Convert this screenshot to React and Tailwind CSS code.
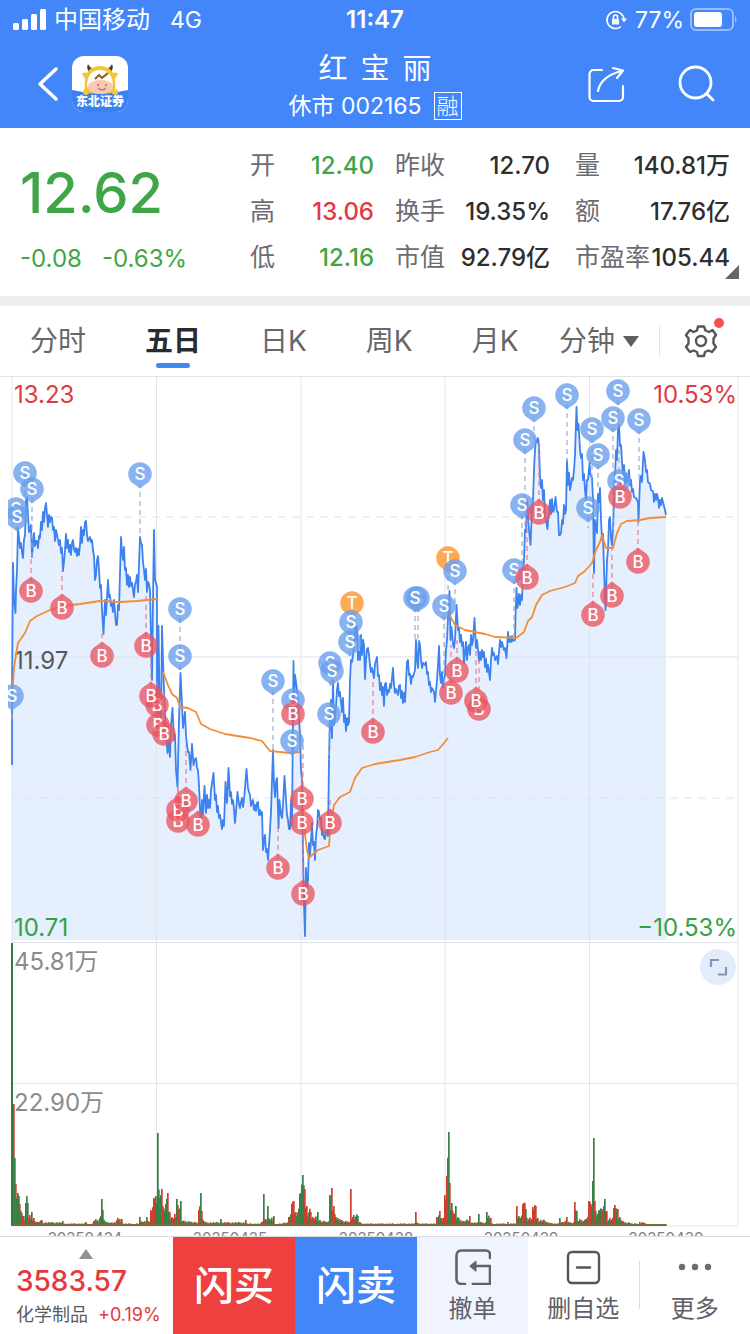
const CJK = "font-['Inter','Noto_Sans_CJK_SC',sans-serif]";

const QUOTES = [
  [
    ["开", "12.40", "text-[#3fa648]"],
    ["高", "13.06", "text-[#e5383f]"],
    ["低", "12.16", "text-[#3fa648]"],
  ],
  [
    ["昨收", "12.70", "text-[#2e2e30]"],
    ["换手", "19.35%", "text-[#2e2e30]"],
    ["市值", "92.79亿", "text-[#2e2e30]"],
  ],
  [
    ["量", "140.81万", "text-[#2e2e30]"],
    ["额", "17.76亿", "text-[#2e2e30]"],
    ["市盈率", "105.44", "text-[#2e2e30]"],
  ],
];

const PRICE =
  "12,765 12,695 13,563 14,600 15.5,613 16,590 17,570 18,528 20,548 21,543 22,552 23,558 24,540 25,535 26,500 27,497 28,515 29,532 30,530 31,525 32,557 33,545 34,533 35,546 36,541 37,541 38,548 39,536 40,538 41,522 42,530 43,512 44,522 45,508 46,503 47,515 48,527 49,515 50,522 51,517 52,518 53,530 54,527 55,541 56,530 57,535 59,545 60,540 61,553 62,548 63,571 64,562 65,550 66,534 67,548 68,540 69,552 70,545 71,555 72,543 73,540 74,549 75,552 76,548 77,556 78,549 79,555 80,545 81,527 82,543 83,530 84,535 85,522 86,521 87,535 88,541 90,537 91,542 92,540 93,550 94,556 95,580 96,575 97,560 98,556 99,570 100,588 101,585 102,610 103.5,634 105,600 106,615 108,580 109,597 110,595 111,606 112,603 113,612 114,600 115,612 116,625 117,625 118,605 119,610 121,537 122,552 123,560 124,547 125,570 126,568 127,585 128,575 129,587 130,577 131,586 132,583 134,597 135,584 136,582 137,575 138,592 140,537 141,543 142,545 143,562 144,570 145,580 146,569 147,592 148,582 149,584 150,590 151,638 152,680 153,600 154,530 155,580 156,583 157,587 157,720 158.5,626 159.5,700 161,720 162,626 163,660 164,690 165,715 166,735 167.5,753 168.5,740 170,757 171,725 172.5,708 174,740 175,735 176,770 177.5,787 179,720 180.5,673 182,705 183,728 184,720 185,712 186,735 187,745 188,752 189,752 190.5,770 192,744 193.5,765 194.5,760 196,758 197,768 198,770 199,785 200,810 201,825 202,800 203,815 204.5,786 206,813 207,795 208,808 209,800 210,808 211,790 213.5,773 215,800 216,795 217,812 218,806 219,818 220,815 222,829 223,820 224,826 225.5,782 226,792 227,803 228.5,768 230,796 231,792 232,804 233,800 234,809 235,823 236,812 237.5,792 239,804 240,808 241,802 242,798 243,807 244,800 246.5,769 248,788 249,792 250,795 251,806 252,802 253,800 254,810 255,805 256,811 257,803 258,802 259,815 260,810 261,815 262,812 263,850 264,840 265,835 266,852 267,849 268,860 270,830 271,812 273,750 274,785 275,797 276,782 277,778 278.5,828 279.5,800 281,815 282,818 283,805 284.5,776 286,800 287,815 288,820 289,829 290,829 291,800 292,825 293.5,661 294,700 295,675 296,682 297,690 298,700 299,720 300,735 301,770 302,780 303,850 304,905 305,936 306,868 307,890 308,880 309,843 310,855 311,840 312,823 313,845 314,842 315,860 316,835 317,828 318,810 319,812 320,820 321,818 322,835 323,830 324,838 325,839 326,832 327,830 328,836 329,760 330,720 331,700 332,738 333,680 334,725 335,718 336,706 337,690 338,683 339,696 340,692 341,702 342,712 343,698 344,722 345,715 346,731 347,718 348,725 349,722 350,680 351,660 352,662 353,655 354,645 355,622 356,640 357,626 358,660 359,652 360,660 361,635 362,655 363,640 364,645 365,679 366,660 367,649 368,648 369,655 370,665 371,672 372,668 374,678 375,664 377,657 378,676 379,675 380,690 381,683 382,695 383,687 384,706 385,684 386,683 387,695 388,690 389,692 390,684 391,688 393,668 394,685 395,693 396,689 398,695 399,686 400,685 401,698 402,691 403,703 404,693 405,702 407,662 408,660 409,675 410,674 411,684 412,676 413,677 415,670 416,640 417,660 418,668 419,641 420,645 421,660 422,668 423,663 425,665 426,662 427,674 428,672 429,685 430,682 431,692 432,688 434,692 435,702 437,680 438,665 439,646 440,675 441,683 442,672 443,688 444,680 445,675 446,650 447,640 448,618 449.5,591 450.5,640 451.5,627 453,644 454,648 455,640 456.5,605 458,630 459,628 460,642 461,635 462,646 463,642 464,663 466,642 467,660 468,648 469,645 470,655 471,635 472,645 473,640 474.5,618 476,648 477,640 478,650 479,661 480,652 481,660 482,650 483,657 484,652 485,667 486,659 487,672 488,665 490,680 491,660 492,648 493,655 494,653 495,660 497,656 498,664 500,640 501,647 502,642 504,650 505,648 506.5,658 508,632 509,642 510,637 511,642 512,636 513,641 515,640 515.5,616 516.5,588 517.5,608 519,594 520,605 521,595 522,600 523,575 524,560 525,530 526,532 527,500 528,518 529,530 530.5,545 532,510 533,500 534,470 535,450 536,440 537,442 538,438 539,446 540,478 541,488 542,480 543,500 544,490 545,518 546,520 547.5,529 548.5,515 550,500 551,514 552,499 553,512 554,510 555.5,497 557,512 558,512 559,535 560,535 561,533 562,520 563,524 564,505 565,514 566,510 567,460 568,485 569,473 570,490 571,485 572,478 573,480 574,470 575,455 576.5,407 577.5,430 578.5,424 580,450 581,458 582,454 583,480 584,474 585,490 586,500 587,480 588,480 589.5,463 590.5,475 592,478 593,500 594,573 595,520 597,533 598,494 599,502 600,488 601,520 602,540 603,534 604,570 605.5,610 607,560 608,550 609,520 610,517 611,538 612,545 613,530 614,500 615,480 616,450 617,460 618,430 619,425 620,446 621,445 622,462 623,475 624,465 625,484 626,474 627,482 628,478 629,470 630,485 631,480 632,492 633,489 634,497 636,498 638,502 638.5,522 640,480 641,476 642,482 643.5,452 645,460 646,472 647,470 648,482 650,484 651,490 653,491 654,502 655,494 656,500 657,494 658,498 659,508 660,500 661,505 662,498 664,506 665,510 666,515";

const AVERAGES = [
  "12,700 14,668 16,655 18,643 25,633 30,621 37,616 50,610 62,606 80,604 100,601 120,602 137,601 157,599",
  "163,672 168,685 172,694 177,698 180,707 188,708 196,712 201,724 210,729 225,734 250,738 262,741 270,751 290,753 300,752",
  "303,810 305,835 307,850 309,858 312,855 318,850 329,846 331,820 334,805 340,797 350,792 355,778 362,768 375,764 400,760 415,757 430,752 438,750 444,743 448,738",
  "449,614 455,625 465,630 485,634 495,637 516,638 524,632 528,621 532,617 536,605 542,595 550,591 565,587 575,583 578,576 585,571 592,563 596,550 600,542 602,535 606,548 613,548 617,533 621,524 627,521 640,520 650,518 666,517",
];

// kind, x, y, far end of the dashed lead
const MARKS = [
  ["S", 25, 473, 497], ["S", 32, 489, 556], ["S", 16, 509, 530], ["S", 17, 517, 530],
  ["S", 140, 474, 537], ["S", 12, 696, 720], ["S", 180, 609, 656], ["S", 180, 656, 673],
  ["S", 273, 681, 750], ["S", 293, 700, 720], ["S", 292, 741, 760],
  ["T", 352, 603, 625], ["S", 351, 622, 640], ["S", 350, 642, 660],
  ["S", 330, 663, 690], ["S", 332, 671, 690], ["S", 329, 714, 760],
  ["S", 418, 598, 645], ["S", 415, 598, 642], ["S", 444, 606, 684],
  ["T", 448, 558, 600], ["S", 455, 571, 605], ["S", 514, 570, 636],
  ["S", 522, 505, 595], ["S", 525, 440, 530], ["S", 534, 408, 440],
  ["S", 567, 395, 462], ["S", 592, 429, 478], ["S", 598, 455, 490],
  ["S", 588, 508, 528], ["S", 613, 418, 530], ["S", 618, 391, 425],
  ["S", 619, 481, 450], ["S", 639, 420, 480],
  ["B", 31, 591, 556], ["B", 62, 608, 570], ["B", 102, 656, 634], ["B", 146, 646, 592],
  ["B", 157, 705, 680], ["B", 151, 696, 638], ["B", 158, 725, 700], ["B", 164, 734, 690],
  ["B", 178, 821, 787], ["B", 178, 810, 787], ["B", 186, 801, 745], ["B", 198, 825, 810],
  ["B", 278, 868, 828], ["B", 293, 714, 700], ["B", 302, 799, 770], ["B", 302, 823, 800],
  ["B", 303, 894, 740], ["B", 330, 823, 800], ["B", 373, 732, 678], ["B", 457, 671, 640],
  ["B", 451, 693, 645], ["B", 479, 709, 660], ["B", 476, 701, 650], ["B", 539, 513, 440],
  ["B", 527, 578, 510], ["B", 593, 615, 570], ["B", 612, 596, 545], ["B", 620, 497, 470],
  ["B", 638, 562, 520],
];

const MARK_FILL = { S: "#669eec", B: "#ea5560", T: "#fb9226" };

// x, height, and an optional colour for a bar that stands out
const VOLUME = [
  [14, 122, "r"], [15, 68, "g"], [16, 42], [18, 33], [20, 22], [22, 13], [24, 10], [25, 6],
  [26, 23, "g"], [28, 23, "g"], [29, 8], [32, 14, "g"], [34, 8], [38, 4], [42, 6, "r"], [50, 3],
  [63, 5], [70, 2], [80, 2], [86, 4], [90, 2], [94, 5], [100, 8], [102, 27, "g"], [103, 16, "g"],
  [105, 5], [110, 3], [117, 6, "r"], [122, 7], [128, 2], [134, 2], [140, 9, "g"], [143, 4],
  [147, 9], [149, 4], [151, 16, "r"], [154, 28], [156, 30], [158, 93, "g"], [160, 28],
  [162, 37, "r"], [163, 20], [165, 15], [166, 22, "g"], [168, 33, "r"], [170, 14], [173, 8],
  [175, 12], [177, 27, "g"], [179, 17, "r"], [181, 25, "g"], [183, 5], [192, 4], [196, 3],
  [199, 16], [201, 33, "g"], [202, 15], [204, 5], [210, 3], [221, 7, "g"], [224, 3], [235, 3],
  [246, 6, "r"], [249, 2], [262, 4], [264, 32, "g"], [266, 7], [268, 20, "g"], [270, 6],
  [274, 10, "g"], [277, 2], [284, 3], [289, 9], [292, 22, "r"], [294, 25, "r"], [296, 14],
  [300, 32], [303, 51, "g"], [305, 37, "r"], [307, 20], [311, 14, "r"], [314, 7], [318, 14],
  [320, 6], [327, 4], [330, 31, "r"], [332, 38, "r"], [334, 20], [336, 9], [342, 6], [349, 4],
  [351, 37, "r"], [353, 9], [358, 10, "g"], [361, 3], [370, 2], [395, 2], [408, 2],
  [416, 14, "r"], [418, 3], [430, 2], [437, 9], [440, 15, "r"], [442, 8], [445, 31, "r"],
  [447, 50, "r"], [449, 94, "g"], [450, 43, "r"], [452, 23, "g"], [454, 12], [456, 20],
  [459, 8], [464, 5], [470, 10, "r"], [473, 3], [479, 12, "g"], [482, 3], [487, 14, "g"],
  [491, 8], [494, 2], [508, 4], [512, 2], [517, 20, "r"], [520, 8], [523, 22, "r"],
  [524, 23, "r"], [526, 17, "g"], [529, 7], [533, 19, "r"], [536, 20, "r"], [538, 8],
  [545, 5], [552, 3], [556, 2], [560, 8, "g"], [563, 4], [567, 9, "r"], [570, 3],
  [575, 24, "r"], [577, 15, "g"], [579, 5], [586, 7], [589, 25, "r"], [591, 22, "r"],
  [593, 45, "g"], [594, 88, "g"], [595, 25, "r"], [598, 12], [600, 16], [602, 17],
  [605, 27, "g"], [607, 15], [609, 6], [614, 18, "r"], [616, 18, "r"], [618, 17, "r"],
  [620, 9], [623, 5], [630, 3], [634, 2], [640, 4], [645, 3], [650, 1], [666, 2],
];

function volumeBars() {
  const bars = [];
  for (let i = 0; i < VOLUME.length; i += 1) {
    const [x, h, tone] = VOLUME[i];
    const next = VOLUME[i + 1];
    bars.push({ x, h, tone: tone || (x % 3 ? "r" : "g") });
    if (!next) break;
    for (let step = x + 1; step < next[0]; step += 1) {
      const low = Math.min(h, next[1]);
      const swing = 0.7 + ((step * 37) % 11) / 15;
      bars.push({ x: step, h: Math.max(1, low * swing), tone: (step * 7) % 5 < 2 ? "r" : "g" });
    }
  }
  return bars;
}

const DAYS = [["20250424", 85], ["20250425", 230], ["20250428", 376], ["20250429", 521], ["20250430", 666]];

function Mark({ kind, x, y }) {
  const tip = kind === "B" ? -1 : 1;
  return (
    <g>
      <path
        d={`M${x - 5} ${y + tip * 10.7} L${x} ${y + tip * 14.5} L${x + 5} ${y + tip * 10.7} A11.8 11.8 0 1 ${tip > 0 ? 0 : 1} ${x - 5} ${y + tip * 10.7} Z`}
        fill={MARK_FILL[kind]}
        opacity="0.78"
      />
      <text x={x} y={y + 6} textAnchor="middle" fill="#fff" className="text-[17px] font-medium">
        {kind}
      </text>
    </g>
  );
}

function Chart() {
  return (
    <svg
      viewBox="0 376 750 860"
      className="block w-full font-['Inter','Noto_Sans_CJK_SC',sans-serif]"
      role="img"
      aria-label="五日走势图"
    >
      <polygon points={`12,940 ${PRICE} 666,940`} fill="#e5effd" />
      <g stroke="#e0e3e8" strokeWidth="1">
        <path d="M0 376.500H750M12 657H738M12 942.500H738M12 1083.500H738M12 1226H738" fill="none" />
        <path d="M12 377V1226M156.500 377V1226M301 377V1226M445 377V1226M589.500 377V1226M738 377V1226" fill="none" />
        <path d="M12 517H738M12 798H738" fill="none" strokeDasharray="8 6" />
      </g>
      <g className="text-[24px]">
        <text x="14" y="403" fill="#e0393f">13.23</text>
        <text x="737" y="403" textAnchor="end" fill="#e0393f">10.53%</text>
        <text x="14" y="669" fill="#55585e">11.97</text>
        <text x="14" y="936" fill="#35a23f">10.71</text>
        <text x="737" y="936" textAnchor="end" fill="#35a23f">−10.53%</text>
        <text x="14" y="970" fill="#8b8b8e">45.81万</text>
        <text x="14" y="1111" fill="#8b8b8e">22.90万</text>
      </g>
      <g fill="none" strokeLinejoin="round">
        <polyline points={PRICE} stroke="#3d82ee" strokeWidth="1.800" />
        {AVERAGES.map((points) => (
          <polyline key={points} points={points} stroke="#f28d35" strokeWidth="1.800" />
        ))}
      </g>
      {MARKS.map(([kind, x, y, end]) => (
        <line
          key={`${kind}${x}-${y}`}
          x1={x}
          x2={x}
          y1={y}
          y2={end}
          stroke={kind === "B" ? "#e87c8c" : "#9fa9cc"}
          strokeWidth="1.200"
          strokeDasharray="5 4"
        />
      ))}
      <clipPath id="plot">
        <rect x="8" y="376" width="742" height="580" />
      </clipPath>
      <g clipPath="url(#plot)">
        {MARKS.map(([kind, x, y]) => (
          <Mark key={`${kind}${x}-${y}`} kind={kind} x={x} y={y} />
        ))}
      </g>
      {volumeBars().map(({ x, h, tone }) => (
        <rect
          key={x}
          x={x - 1}
          y={1226 - h}
          width="1.700"
          height={h}
          fill={tone === "r" ? "#cf3f30" : "#3c7f46"}
        />
      ))}
      <rect x="11" y="943" width="2" height="283" fill="#2f7d43" />
      <rect x="12" y="1224" width="654" height="2" fill="#7c6a3c" />
      <g className="text-[15px]" fill="#808084">
        {DAYS.map(([day, x]) => (
          <text key={day} x={x} y="1243" textAnchor="middle">{day}</text>
        ))}
      </g>
      <circle cx="718" cy="967" r="18" fill="#e3ecfa" />
      <path d="M711 967V960H719M726 967V974.500H718" fill="none" stroke="#8296bd" strokeWidth="2.200" />
    </svg>
  );
}

function Logo() {
  return (
    <svg viewBox="0 0 56 56" className="size-14 rounded-xl" role="img" aria-label="东北证券">
      <rect width="56" height="56" fill="#fff" />
      <path d="M0 34Q28 41 56 34V56H0Z" fill="#3a82f2" />
      <path d="M17 16Q14 12 16 8Q18 12 22 13ZM39 16Q42 12 40 8Q38 12 34 13Z" fill="#5c3a2c" />
      <path d="M10 17Q15 15 18 20L16 25Q11 22 10 17ZM46 17Q41 15 38 20L40 25Q45 22 46 17Z" fill="#f5c542" />
      <path d="M13 37Q10 10 28 10Q46 10 43 37Z" fill="#f3c638" />
      <path d="M15 31Q15 14 28 14Q41 14 41 31Z" fill="#fffaf2" />
      <ellipse cx="28.500" cy="31" rx="12.500" ry="7" fill="#fac9b5" />
      <path d="M23 23L27 19L30 22L36 17" stroke="#8c5228" strokeWidth="1.800" fill="none" />
      <path d="M26 32Q30 36 34 32" stroke="#d0785f" strokeWidth="1.400" fill="none" />
      <circle cx="26" cy="29" r="1" fill="#c06a50" />
      <circle cx="34" cy="29" r="1" fill="#c06a50" />
      <circle cx="14" cy="36" r="3" fill="#f3c638" />
      <circle cx="43" cy="36" r="3" fill="#f3c638" />
      <text x="28" y="50" textAnchor="middle" fill="#fff" className="font-['Noto_Sans_CJK_SC',sans-serif] text-[12px] font-black">
        东北证券
      </text>
    </svg>
  );
}

function StatusBar() {
  return (
    <div className="grid h-10 grid-cols-3 items-center pr-3 pl-3 text-[23px] leading-7">
      <div className="flex items-center">
        <svg viewBox="0 0 34 24" className="h-6 w-[34px]" fill="#fff" aria-hidden="true">
          <rect x="1" y="15" width="6" height="7" rx="1.500" />
          <rect x="10" y="11" width="6" height="11" rx="1.500" />
          <rect x="19" y="6" width="6" height="16" rx="1.500" />
          <rect x="28" y="1" width="6" height="21" rx="1.500" />
        </svg>
        <span className="ml-2 text-[24px]">中国移动</span>
        <span className="ml-5">4G</span>
      </div>
      <div className="text-center text-[24px] font-semibold">11:47</div>
      <div className="flex items-center justify-end">
        <svg viewBox="0 0 22 22" className="size-[22px]" fill="none" stroke="#fff" strokeWidth="1.600" aria-hidden="true">
          <path d="M19 11A8.500 8.500 0 1 0 16 17.500" />
          <path d="M16 9.500H22L19 13.500Z" fill="#fff" stroke="none" />
          <rect x="7" y="10" width="7" height="5.500" fill="#fff" stroke="none" />
          <path d="M8.500 10V8A2 2 0 0 1 12.500 8V10" />
        </svg>
        <span className="ml-2">77%</span>
        <svg viewBox="0 0 50 24" className="ml-1 h-6 w-[50px]" aria-hidden="true">
          <rect x="3" y="1" width="42" height="21" rx="5" fill="none" stroke="#fff" strokeOpacity="0.450" strokeWidth="2" />
          <rect x="6" y="4" width="28" height="15" rx="3" fill="#fff" />
          <path d="M47 8Q50 11.500 47 15Z" fill="#fff" fillOpacity="0.500" />
        </svg>
      </div>
    </div>
  );
}

function Header() {
  return (
    <header className="bg-[#4286fa] text-white">
      <StatusBar />
      <div className="grid h-[88px] grid-cols-[1fr_auto_1fr] items-center pr-8 pl-8">
        <div className="flex items-center">
          <button type="button" aria-label="返回" className="h-10 w-8">
            <svg viewBox="0 0 32 40" className="h-10 w-8" fill="none" stroke="#fff" strokeWidth="3.500" strokeLinecap="round" strokeLinejoin="round">
              <path d="M24 5L8 20L24 35" />
            </svg>
          </button>
          <div className="ml-2">
            <Logo />
          </div>
        </div>
        <div className="text-center">
          <h1 className="font-['Noto_Sans_CJK_SC',sans-serif] text-[29px] leading-10 font-normal whitespace-pre">红  宝  丽</h1>
          <div className="mt-1 flex h-8 items-center justify-center gap-3 text-[23px]">
            <span>休市 002165</span>
            <span className="flex size-7 items-center justify-center border border-white text-[22px] font-light">融</span>
          </div>
        </div>
        <div className="flex items-center justify-end gap-[52px]">
          <button type="button" aria-label="分享">
            <svg viewBox="0 0 40 40" className="size-10" fill="none" stroke="#fff" strokeWidth="2.200" strokeLinecap="round" strokeLinejoin="round">
              <path d="M16 6H7.500A4 4 0 0 0 3.500 10V33A4 4 0 0 0 7.500 37H33A4 4 0 0 0 37 33V22" />
              <path d="M12 27Q15 12 36 7M27 4L37 6.500L31 14" />
            </svg>
          </button>
          <button type="button" aria-label="搜索">
            <svg viewBox="0 0 40 40" className="size-10" fill="none" stroke="#fff" strokeWidth="2.800" strokeLinecap="round">
              <circle cx="17.500" cy="18.500" r="15.500" />
              <path d="M29 30L35 36" />
            </svg>
          </button>
        </div>
      </div>
    </header>
  );
}

function Summary() {
  return (
    <section className="relative flex h-[168px] pt-[15px] pr-5 pl-5">
      <div className="w-[230px] text-[#3fa648]">
        <div className="pt-4 text-[56px] leading-[68px] font-medium">12.62</div>
        <div className="mt-4 flex gap-5 text-[24px] leading-8">
          <span>-0.08</span>
          <span>-0.63%</span>
        </div>
      </div>
      <dl className="grid flex-1 grid-cols-[124px_155px_1fr] gap-x-[21px]">
        {QUOTES.map((column, i) => (
          <div key={column[0][0]} className={i === 2 ? "flex flex-col pl-1" : "flex flex-col"}>
            {column.map(([label, value, tone]) => (
              <div key={label} className="flex h-[46px] items-center justify-between whitespace-nowrap">
                <dt className="text-[25px] text-[#6b6b72]">{label}</dt>
                <dd className={`text-[24px] font-medium ${tone}`}>{value}</dd>
              </div>
            ))}
          </div>
        ))}
      </dl>
      <svg viewBox="0 0 14 14" className="absolute right-[11px] bottom-[17px] size-3.5" aria-hidden="true">
        <path d="M14 0V14H0Z" fill="#65656a" />
      </svg>
    </section>
  );
}

function Tabs() {
  const tab = "flex h-full items-center text-[28px] text-[#66666b]";
  return (
    <nav className="flex h-[70px] items-center justify-between pr-8 pl-[30px]">
      <div className="flex h-full items-center gap-[59px]">
        <button type="button" className={tab}>分时</button>
        <button type="button" className="relative flex h-full items-center text-[28px] font-bold text-[#2b2b2e]">
          五日
          <span className="absolute bottom-2 left-1/2 h-[5px] w-[34px] -translate-x-1/2 rounded-full bg-[#4286f0]" />
        </button>
        <button type="button" className={tab}>日K</button>
        <button type="button" className={tab}>周K</button>
        <button type="button" className={tab}>月K</button>
      </div>
      <div className="flex items-center">
        <button type="button" className={tab}>
          分钟
          <svg viewBox="0 0 16 11" className="ml-2 h-[11px] w-4" aria-hidden="true">
            <path d="M0 0H16L8 11Z" fill="#5d5d62" />
          </svg>
        </button>
        <span className="ml-5 h-8 w-px bg-[#e6e6e8]" />
        <button type="button" aria-label="设置" className="relative ml-6">
          <svg viewBox="0 0 34 34" className="size-[34px]" fill="none" stroke="#55555a" strokeWidth="2.400" strokeLinejoin="round">
            <path d="M14 2.500H20L21.500 6.500L25 8L28.500 6L32 11L29.500 14.500V19.500L32 23L28 28L24.500 26.500L21 28L20 32H14L13 28L9.500 26.500L6 28L2 23L4.500 19.500V14.500L2 11L6 6L9.500 8L13 6.500Z" />
            <circle cx="17" cy="17" r="5" />
          </svg>
          <span className="absolute -top-1.5 -right-1.5 size-2.5 rounded-full bg-[#f4504f]" />
        </button>
      </div>
    </nav>
  );
}

function BottomBar() {
  const label = "mt-1.5 text-[24px] leading-9 text-[#606067]";
  return (
    <footer className="flex h-[98px] border-t border-[#dcdce0] bg-white">
      <button type="button" className="w-[173px] pt-[9px] pl-4 text-left">
        <svg viewBox="0 0 14 10" className="ml-[63px] h-2.5 w-3.5" aria-hidden="true">
          <path d="M7 0L14 10H0Z" fill="#909094" />
        </svg>
        <div className="mt-1 text-[28px] leading-9 font-medium text-[#e5383f]">3583.57</div>
        <div className="flex items-center gap-2.5 text-[18px] leading-8 whitespace-nowrap">
          <span className="text-[#5a5a5e]">化学制品</span>
          <span className="text-[#e5383f]">+0.19%</span>
        </div>
      </button>
      <button type="button" className="w-[122px] bg-[#ee413f] text-[40px] font-medium text-white">闪买</button>
      <button type="button" className="w-[122px] bg-[#4286fa] text-[40px] font-medium text-white">闪卖</button>
      <button type="button" className="flex w-[111px] flex-col items-center bg-[#f0f4fe] pt-3">
        <svg viewBox="0 0 36 36" className="size-9" fill="none" stroke="#62626c" strokeWidth="2.600" strokeLinecap="round">
          <path d="M10 35H6A5 5 0 0 1 1.500 30.500V6A5 5 0 0 1 6 1.500H31A4 4 0 0 1 35 5.500V9" />
          <path d="M18 35H35V17H18" strokeLinecap="square" />
          <path d="M15 17L21 12V22Z" fill="#62626c" strokeWidth="1" />
        </svg>
        <span className={label}>撤单</span>
      </button>
      <button type="button" className="flex flex-1 flex-col items-center pt-3">
        <svg viewBox="0 0 36 36" className="size-9" fill="none" stroke="#55555c" strokeWidth="2.400" strokeLinecap="round">
          <rect x="3" y="3" width="31" height="31" rx="4" />
          <path d="M12 18.500H25" />
        </svg>
        <span className={label}>删自选</span>
      </button>
      <span className="mt-6 h-12 w-px bg-[#dcdce0]" />
      <button type="button" className="flex flex-1 flex-col items-center pt-3">
        <svg viewBox="0 0 36 36" className="size-9" fill="#6c6c72" aria-hidden="true">
          <circle cx="5" cy="18" r="3.200" />
          <circle cx="18" cy="18" r="3.200" />
          <circle cx="31" cy="18" r="3.200" />
        </svg>
        <span className={label}>更多</span>
      </button>
    </footer>
  );
}

export default function App() {
  return (
    <div className={`min-h-screen bg-white ${CJK}`}>
      <Header />
      <main>
        <Summary />
        <div className="h-2.5 bg-[#efeff0]" />
        <Tabs />
        <Chart />
      </main>
      <BottomBar />
    </div>
  );
}
